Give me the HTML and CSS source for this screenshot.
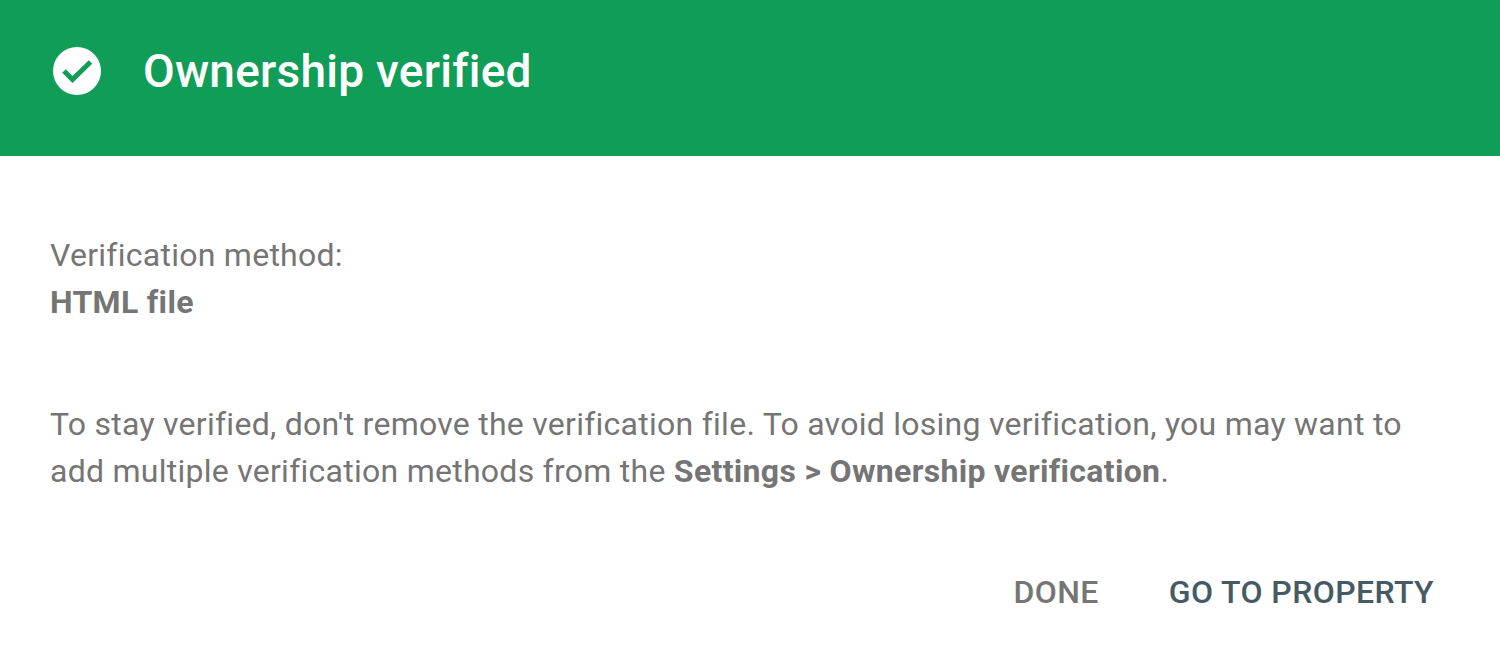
FILE: index.html
```html
<!DOCTYPE html>
<html lang="en">

<head>
    <meta charset="UTF-8">
    <title>Ownership verified</title>
    <link rel="stylesheet" href="styles.css">
</head>

<body>

    <div class="dialog">
        <div class="header">
            <svg class="check-icon" viewBox="0 0 48 48">
                <circle cx="24" cy="24" r="24" fill="#fff"></circle>
                <path d="M11 24 L19.5 32.5 L37.5 15" fill="none" stroke="#0f9d58" stroke-width="5"></path>
            </svg>
            <h1 class="title">Ownership verified</h1>
        </div>

        <div class="content">
            <p class="method">Verification method:<br><b>HTML file</b></p>
            <p class="note">To stay verified, don't remove the verification file. To avoid losing verification, you may want to<br>add multiple verification methods from the <b>Settings &gt; Ownership verification</b>.</p>
        </div>

        <div class="actions">
            <span class="btn-done">DONE</span>
            <span class="btn-go">GO TO PROPERTY</span>
        </div>
    </div>

</body>

</html>
```

FILE: styles.css
```css
html,
body {
    margin: 0;
    background-color: #fff;
    font-family: Roboto, "Liberation Sans", sans-serif;
}

.dialog {
    width: 1500px;
    height: 660px;
    overflow: hidden;
}

.header {
    height: 156px;
    background-color: #0f9d58;
    display: flex;
    align-items: center;
    padding: 0 0 14px 53px;
    box-sizing: border-box;
    gap: 42px;
}

.check-icon {
    width: 48px;
    height: 48px;
    flex: none;
}

.title {
    margin: 0;
    font-size: 46px;
    font-weight: 500;
    letter-spacing: 0.25px;
    color: #fff;
}

.content {
    padding: 76px 50px 0;
    font-size: 32px;
    line-height: 47px;
    letter-spacing: 0.26px;
    color: #757575;
}

.content p {
    margin: 0;
}

.content .method {
    margin-bottom: 75px;
}

.content b {
    font-weight: 700;
    letter-spacing: 0.32px;
}

.actions {
    display: flex;
    justify-content: flex-end;
    gap: 70px;
    padding: 78px 66px 0 0;
    font-size: 32px;
    font-weight: 500;
    letter-spacing: 0.4px;
}

.btn-done {
    color: #757575;
}

.btn-go {
    color: #455a64;
}
```
